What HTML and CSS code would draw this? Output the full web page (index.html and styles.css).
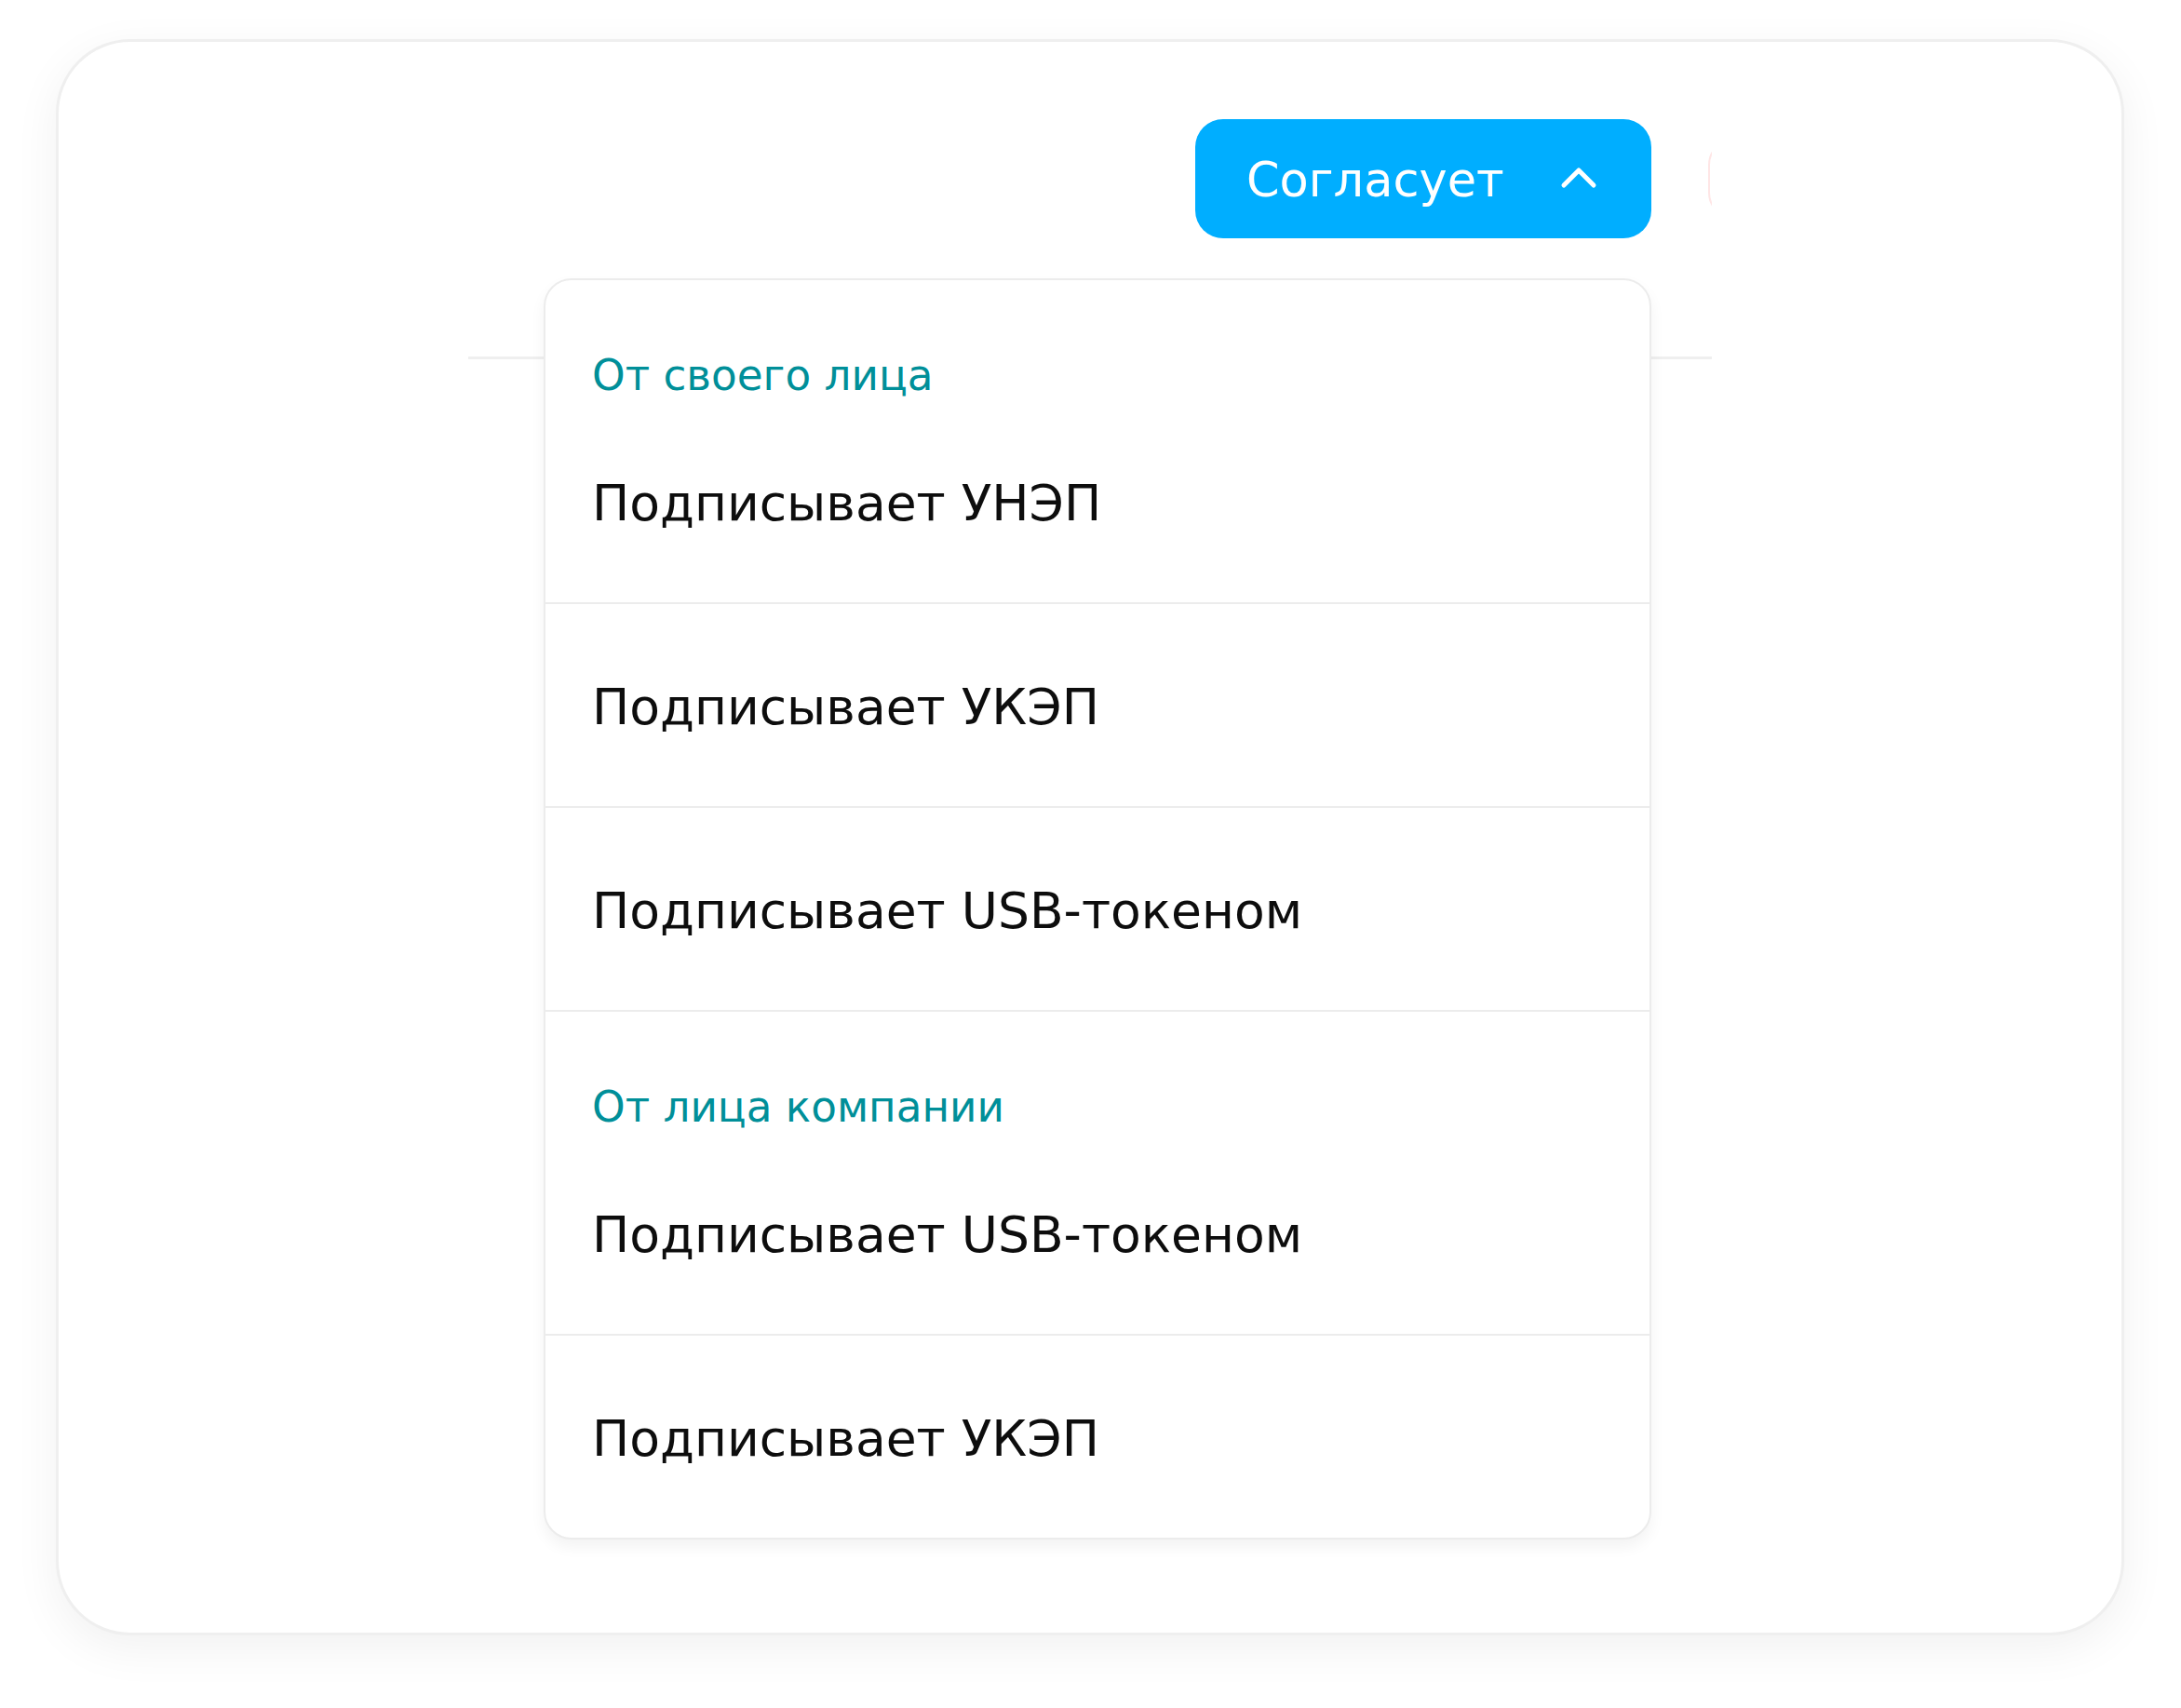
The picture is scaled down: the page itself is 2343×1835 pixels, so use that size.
FILE: index.html
```html
<!DOCTYPE html>
<html lang="ru">
<head>
<meta charset="utf-8">
<title>Согласование</title>
<link rel="stylesheet" href="styles.css">
</head>
<body>
<div class="page">
  <section class="card">
    <div class="panel">
      <div class="toolbar">
        <div class="toolbar-row">
          <button class="role-btn" type="button">
            <span class="role-btn__label">Согласует</span>
            <svg class="role-btn__chevron" width="40" height="24" viewBox="0 0 40 24" aria-hidden="true">
              <polyline points="4,20 20,4 36,20" fill="none" stroke="#fff" stroke-width="5" stroke-linecap="round" stroke-linejoin="round"/>
            </svg>
          </button>
          <button class="remove-btn" type="button" aria-label="Удалить"></button>
        </div>
      </div>

      <div class="menu">
        <div class="menu-group">
          <div class="menu-group__title">От своего лица</div>
          <div class="menu-item">Подписывает УНЭП</div>
        </div>
        <div class="menu-item">Подписывает УКЭП</div>
        <div class="menu-item">Подписывает USB-токеном</div>
        <div class="menu-group">
          <div class="menu-group__title">От лица компании</div>
          <div class="menu-item">Подписывает USB-токеном</div>
        </div>
        <div class="menu-item">Подписывает УКЭП</div>
      </div>
    </div>
  </section>
</div>
</body>
</html>
```

FILE: styles.css
```css
* {
  box-sizing: border-box;
}

html,
body {
  margin: 0;
  background: #ffffff;
}

body {
  font-family: "DejaVu Sans", "Open Sans", sans-serif;
  color: #0d0d0d;
}

.page {
  padding: 42px 61px 78px 60px;
}

/* Outer white card */
.card {
  height: 1715px;
  padding-top: 83px;
  background: #ffffff;
  border: 3px solid #efefef;
  border-radius: 80px;
  box-shadow: 0 14px 50px rgba(0, 0, 0, 0.06);
}

.panel {
  position: relative;
  width: 1336px;
  margin: 0 auto;
}

/* Action bar, clipped at its right edge, with a rule beneath */
.toolbar {
  overflow: hidden;
  padding-bottom: 127px;
  border-bottom: 3px solid #efefef;
}

.toolbar-row {
  display: flex;
  align-items: center;
  justify-content: flex-end;
  gap: 61px;
  margin-right: -296px;
}

.role-btn {
  display: flex;
  align-items: center;
  width: 490px;
  height: 128px;
  padding: 0 58px 0 55px;
  border: none;
  border-radius: 30px;
  background: #00aeff;
  color: #ffffff;
  font-family: inherit;
  font-size: 51px;
  line-height: 1;
  cursor: pointer;
}

.role-btn__label {
  margin-top: 3px;
}

.role-btn__chevron {
  margin-left: auto;
  margin-top: -2px;
}

.remove-btn {
  flex: none;
  width: 300px;
  height: 86px;
  border: 2px solid #ffe6e6;
  border-radius: 28px;
  background: #ffffff;
}

/* Dropdown menu opened from the role button */
.menu {
  position: absolute;
  top: 171px;
  right: 65px;
  width: 1190px;
  background: #ffffff;
  border: 2px solid #ececec;
  border-radius: 30px;
  box-shadow: 0 8px 16px rgba(0, 0, 0, 0.05);
  overflow: hidden;
}

.menu > * + * {
  border-top: 2px solid #ececec;
}

.menu-group__title {
  padding: 76px 50px 0;
  font-size: 45.3px;
  line-height: 53px;
  color: #008f99;
}

.menu-item {
  padding: 78px 50px 74px;
  font-size: 53.5px;
  line-height: 65px;
  color: #0d0d0d;
  white-space: nowrap;
}
```
